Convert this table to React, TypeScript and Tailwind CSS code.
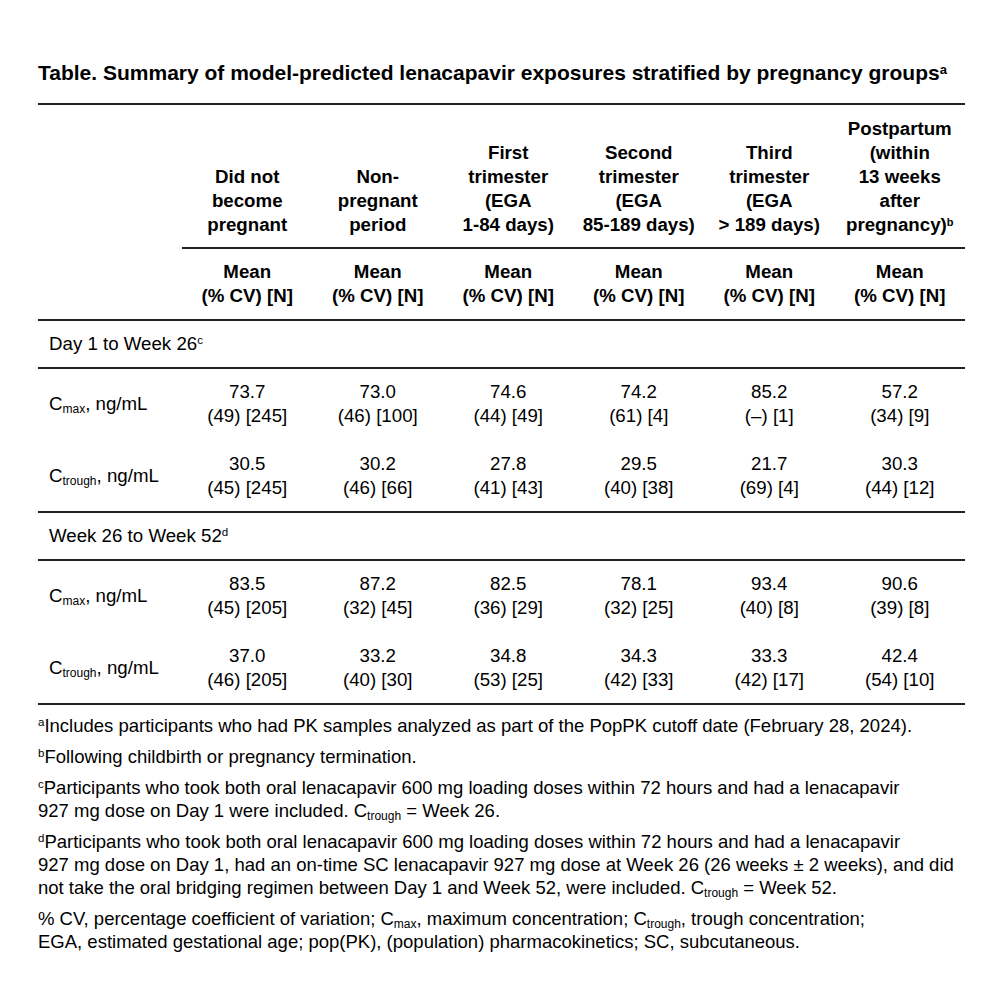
const headers: React.ReactNode[] = [
  <>Did not<br />become<br />pregnant</>,
  <>Non-<br />pregnant<br />period</>,
  <>First<br />trimester<br />(EGA<br />1-84 days)</>,
  <>Second<br />trimester<br />(EGA<br />85-189 days)</>,
  <>Third<br />trimester<br />(EGA<br />&gt; 189 days)</>,
  <>Postpartum<br />(within<br />13 weeks<br />after<br />pregnancy)<sup className="text-[11px]">b</sup></>,
];

type Row = { label: 'max' | 'trough'; values: [string, string][] };

const sections: { title: string; note: string; rows: Row[] }[] = [
  {
    title: 'Day 1 to Week 26',
    note: 'c',
    rows: [
      {
        label: 'max',
        values: [['73.7', '(49) [245]'], ['73.0', '(46) [100]'], ['74.6', '(44) [49]'], ['74.2', '(61) [4]'], ['85.2', '(–) [1]'], ['57.2', '(34) [9]']],
      },
      {
        label: 'trough',
        values: [['30.5', '(45) [245]'], ['30.2', '(46) [66]'], ['27.8', '(41) [43]'], ['29.5', '(40) [38]'], ['21.7', '(69) [4]'], ['30.3', '(44) [12]']],
      },
    ],
  },
  {
    title: 'Week 26 to Week 52',
    note: 'd',
    rows: [
      {
        label: 'max',
        values: [['83.5', '(45) [205]'], ['87.2', '(32) [45]'], ['82.5', '(36) [29]'], ['78.1', '(32) [25]'], ['93.4', '(40) [8]'], ['90.6', '(39) [8]']],
      },
      {
        label: 'trough',
        values: [['37.0', '(46) [205]'], ['33.2', '(40) [30]'], ['34.8', '(53) [25]'], ['34.3', '(42) [33]'], ['33.3', '(42) [17]'], ['42.4', '(54) [10]']],
      },
    ],
  },
];

function Sub({ children }: { children: React.ReactNode }) {
  return <sub className="text-[12px]">{children}</sub>;
}

function Sup({ children }: { children: React.ReactNode }) {
  return <sup className="text-[11.5px]">{children}</sup>;
}

export default function App() {
  return (
    <div className="w-[1000px] h-[1000px] bg-white pl-[38px] pt-[61px] text-black text-[18.7px] leading-6 font-['Liberation_Sans',Arial,sans-serif]">
      <div className="w-[927px]">
        <h1 className="font-bold text-[21px] leading-6 mb-[18px]">
          Table. Summary of model-predicted lenacapavir exposures stratified by pregnancy groups<sup className="text-[13px]">a</sup>
        </h1>

        <div className="grid grid-cols-[144px_repeat(6,1fr)] border-t-2 border-[#222]">
          {/* group header */}
          <div />
          {headers.map((h, i) => (
            <div key={i} className="flex items-end justify-center text-center font-bold pt-3 pb-[10px] border-b-2 border-[#222]">
              <div>{h}</div>
            </div>
          ))}

          {/* stat header */}
          <div className="border-b-2 border-[#222]" />
          {headers.map((_, i) => (
            <div key={i} className="text-center font-bold pt-[11px] pb-[11px] border-b-2 border-[#222]">
              Mean<br />(% CV) [N]
            </div>
          ))}

          {sections.map((s) => (
            <div key={s.title} className="contents">
              <div className="col-span-7 pl-[11px] pt-[11px] pb-[11px] border-b-2 border-[#222]">
                {s.title}<Sup>{s.note}</Sup>
              </div>
              {s.rows.map((r, ri) => {
                const pad = ri === 0 ? 'pt-[11px] pb-3' : 'pt-3 pb-[11px]';
                const last = ri === s.rows.length - 1 ? 'border-b-2 border-[#222]' : '';
                return (
                  <div key={r.label} className="contents">
                    <div className={`flex items-center pl-[11px] ${pad} ${last}`}>
                      <span>C<Sub>{r.label}</Sub>, ng/mL</span>
                    </div>
                    {r.values.map(([m, rest], vi) => (
                      <div key={vi} className={`text-center ${pad} ${last}`}>
                        {m}<br />{rest}
                      </div>
                    ))}
                  </div>
                );
              })}
            </div>
          ))}
        </div>

        <div className="mt-[9px] flex flex-col gap-2 leading-[23px] text-[18.5px]">
          <p><Sup>a</Sup>Includes participants who had PK samples analyzed as part of the PopPK cutoff date (February 28, 2024).</p>
          <p><Sup>b</Sup>Following childbirth or pregnancy termination.</p>
          <p>
            <Sup>c</Sup>Participants who took both oral lenacapavir 600 mg loading doses within 72 hours and had a lenacapavir<br />
            927 mg dose on Day 1 were included. C<Sub>trough</Sub> = Week 26.
          </p>
          <p>
            <Sup>d</Sup>Participants who took both oral lenacapavir 600 mg loading doses within 72 hours and had a lenacapavir<br />
            927 mg dose on Day 1, had an on-time SC lenacapavir 927 mg dose at Week 26 (26 weeks ± 2 weeks), and did<br />
            not take the oral bridging regimen between Day 1 and Week 52, were included. C<Sub>trough</Sub> = Week 52.
          </p>
          <p>
            % CV, percentage coefficient of variation; C<Sub>max</Sub>, maximum concentration; C<Sub>trough</Sub>, trough concentration;<br />
            EGA, estimated gestational age; pop(PK), (population) pharmacokinetics; SC, subcutaneous.
          </p>
        </div>
      </div>
    </div>
  );
}
